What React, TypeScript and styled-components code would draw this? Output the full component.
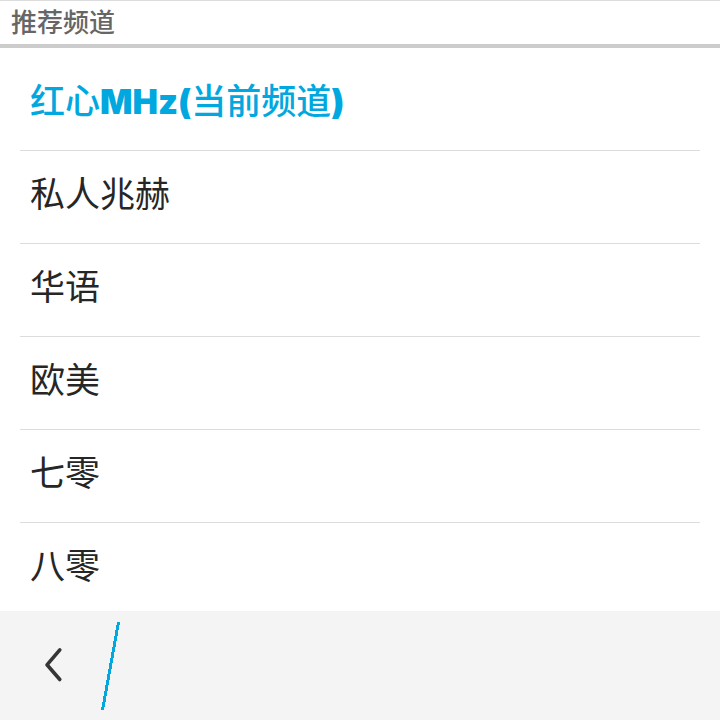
import React from "react";
import styled, { createGlobalStyle } from "styled-components";

const GlobalStyle = createGlobalStyle`
  *, *::before, *::after { box-sizing: border-box; }
  body {
    margin: 0;
    background: #ffffff;
    color: #262626;
    font-family: Inter, "Noto Sans CJK SC", sans-serif;
  }
`;

const Page = styled.div`
  display: flex;
  flex-direction: column;
  height: 100vh;
`;

const Header = styled.header`
  flex: none;
  height: 48px;
  padding: 0 11px;
  border-top: 1px solid #dcdcdc;
  border-bottom: 4px solid #cccccc;
`;

const Title = styled.h1`
  margin: 0;
  color: #666666;
  font-family: "Noto Sans CJK SC", sans-serif;
  font-size: 26px;
  font-weight: 500;
  line-height: 40px;
`;

const Content = styled.main`
  flex: 1;
  min-height: 0;
  overflow: hidden;
  padding: 10px 20px 0;
`;

const List = styled.ul`
  margin: 0;
  padding: 0;
  list-style: none;
`;

const Item = styled.li`
  border-bottom: 1px solid #dcdcdc;
`;

const Channel = styled.button<{ $current?: boolean }>`
  display: block;
  width: 100%;
  height: 92px;
  padding: 0 10px 6px;
  border: 0;
  background: none;
  color: ${(p) => (p.$current ? "#00a8df" : "#262626")};
  font-family: inherit;
  font-size: 35px;
  font-weight: ${(p) => (p.$current ? 500 : 400)};
  line-height: 52px;
  text-align: left;
  cursor: pointer;
`;

const Latin = styled.span`
  font-size: 34px;
  font-weight: 900;
`;

const ActionBar = styled.footer`
  display: flex;
  flex: none;
  align-items: center;
  height: 109px;
  background: #f4f4f4;
`;

const BackButton = styled.button`
  display: flex;
  height: 100%;
  padding: 0;
  border: 0;
  background: none;
  cursor: pointer;
`;

const channels = ["私人兆赫", "华语", "欧美", "七零", "八零"];

export default function App() {
  return (
    <Page>
      <GlobalStyle />
      <Header>
        <Title>推荐频道</Title>
      </Header>
      <Content>
        <List>
          <Item>
            <Channel type="button" $current aria-current="true">
              红心<Latin>MHz(</Latin>当前频道<Latin>)</Latin>
            </Channel>
          </Item>
          {channels.map((name) => (
            <Item key={name}>
              <Channel type="button">{name}</Channel>
            </Item>
          ))}
        </List>
      </Content>
      <ActionBar>
        <BackButton type="button" aria-label="返回">
          <svg width="130" height="109" viewBox="0 0 130 109" fill="none" aria-hidden="true">
            <path d="M59.8 38.8 L47 53.8 L59.8 68.5" stroke="#363636" strokeWidth="3.6" strokeLinecap="round" strokeLinejoin="round" />
            <path d="M117 11 H120 L104 99 H101 Z" fill="#00a8df" shapeRendering="crispEdges" />
          </svg>
        </BackButton>
      </ActionBar>
    </Page>
  );
}
